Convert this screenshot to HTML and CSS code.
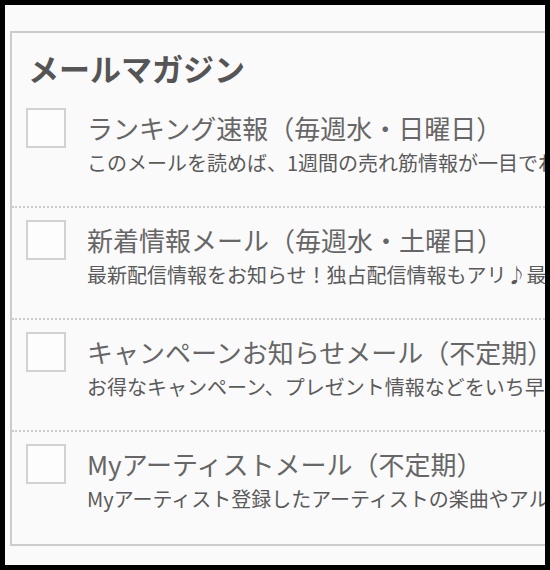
FILE: index.html
```html
<!DOCTYPE html>
<html lang="ja">
<head>
<meta charset="utf-8">
<title>メールマガジン</title>
<link rel="stylesheet" href="styles.css">
</head>
<body>
<div class="page">
  <section class="panel">
    <h2 class="panel-title">メールマガジン</h2>
    <ul class="list">
      <li class="item">
        <span class="check"></span>
        <div class="text">
          <p class="item-title">ランキング速報（毎週水・日曜日）</p>
          <p class="item-desc">このメールを読めば、1週間の売れ筋情報が一目でわかる！</p>
        </div>
      </li>
      <li class="item">
        <span class="check"></span>
        <div class="text">
          <p class="item-title">新着情報メール（毎週水・土曜日）</p>
          <p class="item-desc">最新配信情報をお知らせ！独占配信情報もアリ♪最新情報をチェック！</p>
        </div>
      </li>
      <li class="item">
        <span class="check"></span>
        <div class="text">
          <p class="item-title">キャンペーンお知らせメール（不定期）</p>
          <p class="item-desc">お得なキャンペーン、プレゼント情報などをいち早くお届け！</p>
        </div>
      </li>
      <li class="item">
        <span class="check"></span>
        <div class="text">
          <p class="item-title">Myアーティストメール（不定期）</p>
          <p class="item-desc">Myアーティスト登録したアーティストの楽曲やアルバムの配信情報をお届け！</p>
        </div>
      </li>
    </ul>
  </section>
</div>
</body>
</html>
```
FILE: styles.css
```css
html {
  background: #000;
}
body {
  margin: 0;
  padding: 5px;
  font-family: "Noto Sans CJK JP", "Noto Sans", sans-serif;
}
.page {
  height: 560px;
  background: #fafafa;
  overflow: hidden;
  padding: 26px 0 0 5px;
  box-sizing: border-box;
}
.panel {
  width: 700px;
  border: 2px solid #cccccc;
  box-sizing: border-box;
}
.panel-title {
  margin: 0;
  padding: 15px 0 8px 16px;
  font-size: 31px;
  line-height: 40px;
  font-weight: bold;
  color: #555555;
}
.list {
  list-style: none;
  margin: 0;
  padding: 0;
}
.item {
  display: flex;
  align-items: flex-start;
  padding: 12px 0 28px 14px;
  border-bottom: 2px dotted #cccccc;
}
.item:last-child {
  border-bottom: none;
  padding-bottom: 30px;
}
.check {
  flex: none;
  width: 40px;
  height: 40px;
  box-sizing: border-box;
  border: 2px solid #d2d2d2;
  background: #fdfdfd;
  margin-right: 21px;
}
.text {
  white-space: nowrap;
}
.item-title {
  margin: 0;
  font-size: 26px;
  line-height: 40px;
  color: #666666;
}
.item-desc {
  margin: 0;
  font-size: 20px;
  line-height: 30px;
  color: #5a5a5a;
}
```
